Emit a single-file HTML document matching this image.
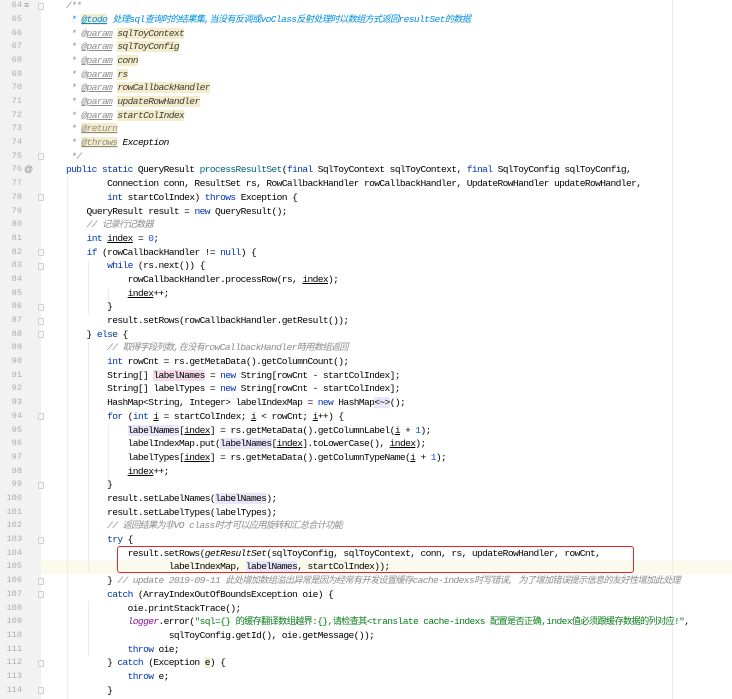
<!DOCTYPE html>
<html><head><meta charset="utf-8"><style>
html,body{margin:0;padding:0;background:#fff;width:732px;height:699px;overflow:hidden;position:relative}
.gut{position:absolute;left:0;top:0;width:41px;height:699px;background:#f2f2f2}
.ln{position:absolute;left:0;width:22px;text-align:right;color:#adadad;font:8.6px "Liberation Mono",monospace}
.row{position:absolute;left:66px;white-space:pre;font-family:"Liberation Mono","Noto Sans CJK SC",monospace;font-size:9.6px;letter-spacing:-0.62px;color:#000}
.cj{font-size:9.2px;letter-spacing:-0.68px}
.k{color:#0033b3}.c{color:#8c8c8c;font-style:italic}.s{color:#067d17}.m{color:#00627a}.f{color:#871094;font-style:italic}.n{color:#1750eb}
.d{color:#8c8c8c;text-decoration:underline;font-style:italic}.p{background:#f5eccb;font-style:italic;color:#3d3d3d}.t{color:#008dde;font-style:italic}
.y{background:#f5eccb}.u{text-decoration:underline}.pk{background:#f4dde9}.lv{background:#e8e6f8}.it{font-style:italic}
.guide{position:absolute;width:1px;background:#ececec}
.fold{position:absolute;left:38px;width:6px;height:7px;border:1px solid #cfcfcf;border-radius:1px;background:#f7f7f7;box-sizing:border-box}
</style></head><body>
<div class="gut"></div>
<div style="position:absolute;left:41px;top:560px;width:691px;height:14px;background:#fcfaed"></div>
<div style="position:absolute;left:672px;top:0;width:1px;height:699px;background:#ececec"></div>
<div class="guide" style="left:67px;top:177px;height:522px"></div>
<div class="guide" style="left:88px;top:260px;height:55px"></div>
<div class="guide" style="left:88px;top:342px;height:230px"></div>
<div class="guide" style="left:108px;top:288px;height:27px"></div>
<div class="guide" style="left:108px;top:424px;height:65px"></div>
<div class="guide" style="left:88px;top:601px;height:55px"></div>
<div style="position:absolute;left:117px;top:546px;width:517px;height:27px;border:1.5px solid #e8262c;border-radius:3px;box-sizing:border-box"></div>
<div id="c"></div>
<script>
var L=[
'<span class="c">/**</span>',
'<span class="t"> * <span class="y u">@todo</span> 处理sql查询时的结果集,当没有反调或voClass反射处理时以数组方式返回resultSet的数据</span>',
'<span class="c"> * </span><span class="d">@param</span> <span class="p">sqlToyContext</span>',
'<span class="c"> * </span><span class="d">@param</span> <span class="p">sqlToyConfig</span>',
'<span class="c"> * </span><span class="d">@param</span> <span class="p">conn</span>',
'<span class="c"> * </span><span class="d">@param</span> <span class="p">rs</span>',
'<span class="c"> * </span><span class="d">@param</span> <span class="p">rowCallbackHandler</span>',
'<span class="c"> * </span><span class="d">@param</span> <span class="p">updateRowHandler</span>',
'<span class="c"> * </span><span class="d">@param</span> <span class="p">startColIndex</span>',
'<span class="c"> * </span><span class="d y">@return</span>',
'<span class="c"> * </span><span class="d y">@throws</span> <span class="it">Exception</span>',
'<span class="c"> */</span>',
'<span class="k">public static</span> QueryResult <span class="m">processResultSet</span>(<span class="k">final</span> SqlToyContext sqlToyContext, <span class="k">final</span> SqlToyConfig sqlToyConfig,',
'        Connection conn, ResultSet rs, RowCallbackHandler rowCallbackHandler, UpdateRowHandler updateRowHandler,',
'        <span class="k">int</span> startColIndex) <span class="k">throws</span> Exception {',
'    QueryResult result = <span class="k">new</span> QueryResult();',
'    <span class="c">// 记录行记数器</span>',
'    <span class="k">int</span> <span class="u">index</span> = <span class="n">0</span>;',
'    <span class="k">if</span> (rowCallbackHandler != <span class="k">null</span>) {',
'        <span class="k">while</span> (rs.next()) {',
'            rowCallbackHandler.processRow(rs, <span class="u">index</span>);',
'            <span class="u">index</span>++;',
'        }',
'        result.setRows(rowCallbackHandler.getResult());',
'    } <span class="k">else</span> {',
'        <span class="c">// 取得字段列数,在没有rowCallbackHandler時用数组返回</span>',
'        <span class="k">int</span> rowCnt = rs.getMetaData().getColumnCount();',
'        String[] <span class="pk">labelNames</span> = <span class="k">new</span> String[rowCnt - startColIndex];',
'        String[] labelTypes = <span class="k">new</span> String[rowCnt - startColIndex];',
'        HashMap&lt;String, Integer&gt; labelIndexMap = <span class="k">new</span> HashMap<span class="lv">&lt;~&gt;</span>();',
'        <span class="k">for</span> (<span class="k">int</span> <span class="u">i</span> = startColIndex; <span class="u">i</span> &lt; rowCnt; <span class="u">i</span>++) {',
'            <span class="lv">labelNames</span>[<span class="u">index</span>] = rs.getMetaData().getColumnLabel(<span class="u">i</span> + <span class="n">1</span>);',
'            labelIndexMap.put(<span class="lv">labelNames</span>[<span class="u">index</span>].toLowerCase(), <span class="u">index</span>);',
'            labelTypes[<span class="u">index</span>] = rs.getMetaData().getColumnTypeName(<span class="u">i</span> + <span class="n">1</span>);',
'            <span class="u">index</span>++;',
'        }',
'        result.setLabelNames(<span class="lv">labelNames</span>);',
'        result.setLabelTypes(labelTypes);',
'        <span class="c">// 返回结果为非VO class时才可以应用旋转和汇总合计功能</span>',
'        <span class="k">try</span> {',
'            result.setRows(<span class="it">getResultSet</span>(sqlToyConfig, sqlToyContext, conn, rs, updateRowHandler, rowCnt,',
'                    labelIndexMap, <span class="lv">labelNames</span>, startColIndex));',
'        } <span class="c">// update 2019-09-11 此处增加数组溢出异常是因为经常有开发设置缓存cache-indexs时写错误, 为了增加错误提示信息的友好性增加此处理</span>',
'        <span class="k">catch</span> (ArrayIndexOutOfBoundsException oie) {',
'            oie.printStackTrace();',
'            <span class="f">logger</span>.error(<span class="s">"sql={} 的缓存翻译数组越界:{},请检查其&lt;translate cache-indexs 配置是否正确,index值必须跟缓存数据的列对应!"</span>,',
'                    sqlToyConfig.getId(), oie.getMessage());',
'            <span class="k">throw</span> oie;',
'        } <span class="k">catch</span> (Exception <span class="y">e</span>) {',
'            <span class="k">throw</span> e;',
'        }'
];
var folds=[64,75,78,82,83,86,87,88,94,99,103,106,107,112,114];
var h='';
for(var i=0;i<L.length;i++){var n=64+i,t=(-0.85+i*13.69).toFixed(2);
var s=L[i].replace(/([\u3000-\u9fff\uff00-\uffef]+)/g,'<span class="cj">$1</span>');
h+='<div class="ln" style="top:'+t+'px;line-height:13.69px;left:0">'+n+'</div>';
h+='<div class="row" style="top:'+t+'px;line-height:13.69px">'+s+'</div>';
if(folds.indexOf(n)>=0)h+='<div class="fold" style="top:'+(+t+3.5)+'px"></div>';}
h+='<div style="position:absolute;left:24px;top:0px;font:9px Liberation Sans;color:#999">&#8801;</div>';
h+='<div style="position:absolute;left:24px;top:'+(-0.85+12*13.69+1)+'px;font:9px Liberation Sans;color:#888">@</div>';
document.getElementById('c').innerHTML=h;
</script>
</body></html>
